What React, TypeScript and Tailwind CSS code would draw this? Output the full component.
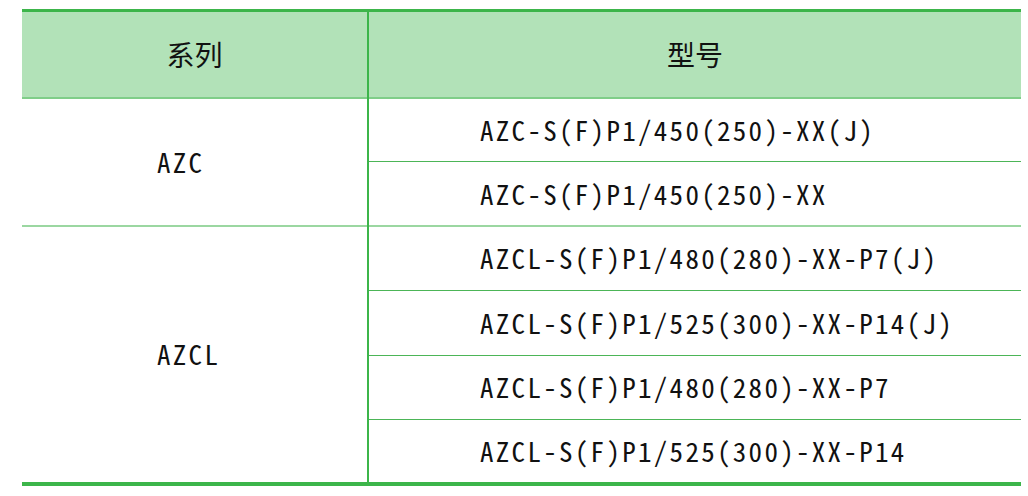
const models = [
  { series: "AZC", items: ["AZC-S(F)P1/450(250)-XX(J)", "AZC-S(F)P1/450(250)-XX"] },
  {
    series: "AZCL",
    items: [
      "AZCL-S(F)P1/480(280)-XX-P7(J)",
      "AZCL-S(F)P1/525(300)-XX-P14(J)",
      "AZCL-S(F)P1/480(280)-XX-P7",
      "AZCL-S(F)P1/525(300)-XX-P14",
    ],
  },
]

const font = { fontFamily: '"Noto Sans Mono CJK SC", "Noto Sans CJK SC", sans-serif' }

export default function App() {
  return (
    <div className="w-[1028px] h-[496px] bg-white pt-[9px] pl-[22px]" style={font}>
      <table className="w-[999px] border-collapse text-[#111]">
        <thead>
          <tr className="bg-[#b2e2b8] border-t-[3px] border-t-[#3cb54a] border-b-2 border-b-[#80ce89]">
            <th className="w-[346px] h-[87px] text-[28px] font-normal border-r-2 border-r-[#3cb54a]">系列</th>
            <th className="h-[87px] text-[28px] font-normal">型号</th>
          </tr>
        </thead>
        <tbody className="border-b-4 border-b-[#3cb54a]">
          {models.map((group, gi) =>
            group.items.map((m, i) => (
              <tr key={m} className={i > 0 ? "border-t border-t-[#4cb557]" : gi > 0 ? "border-t-2 border-t-[#9bd7a1]" : ""}>
                {i === 0 && (
                  <td
                    rowSpan={group.items.length}
                    className="pl-[135px] text-[27px] tracking-[2.3px] border-r-2 border-r-[#3cb54a] align-middle"
                  >
                    {group.series}
                  </td>
                )}
                <td className="h-[64.4px] pl-[111px] text-[27px] tracking-[2.3px] align-middle">{m}</td>
              </tr>
            ))
          )}
        </tbody>
      </table>
    </div>
  )
}
